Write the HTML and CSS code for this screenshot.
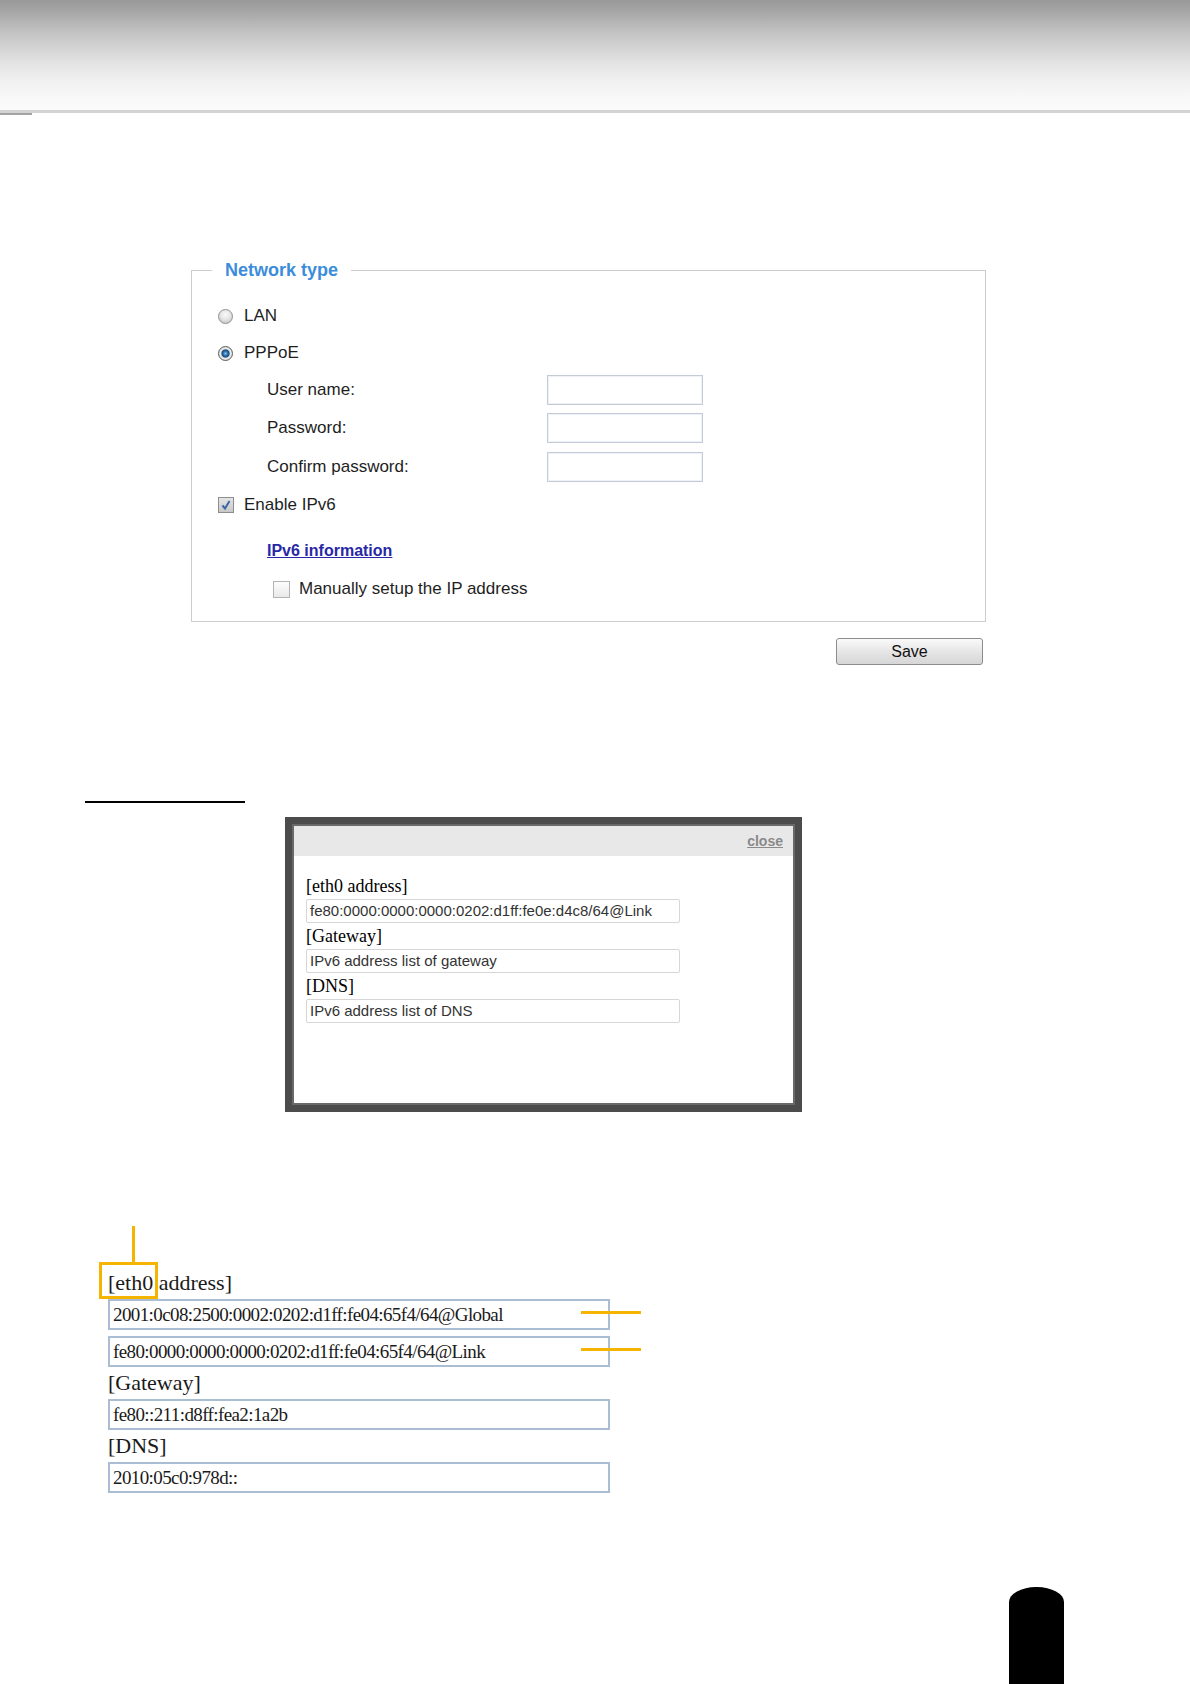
FILE: index.html
```html
<!DOCTYPE html>
<html>
<head>
<meta charset="UTF-8">
<title>Network type</title>
<link rel="stylesheet" href="styles.css">
</head>
<body>
	<!-- 页眉渐变条 -->
	<div class="topbar"></div>
	<div class="topbar-mark"></div>

	<!-- 网络类型设置 -->
	<fieldset class="nettype">
		<legend>Network type</legend>
		<div class="row row-lan"><span class="radio"></span>LAN</div>
		<div class="row row-pppoe"><span class="radio on"></span>PPPoE</div>
		<div class="row field"><span class="field-name">User name:</span><span class="textbox"></span></div>
		<div class="row field"><span class="field-name">Password:</span><span class="textbox"></span></div>
		<div class="row field row-confirm"><span class="field-name">Confirm password:</span><span class="textbox"></span></div>
		<div class="row"><span class="check on"><svg width="14" height="14" viewBox="0 0 14 14"><path d="M3.5 7.5 L6 10.5 L10.5 3" fill="none" stroke="#3c64a8" stroke-width="2"/></svg></span>Enable IPv6</div>
		<div class="row row-link"><a href="#" class="info-link">IPv6 information</a></div>
		<div class="row row-manual"><span class="check"></span>Manually setup the IP address</div>
	</fieldset>
	<div class="actions"><button class="save" type="button">Save</button></div>

	<div class="rule"></div>

	<!-- IPv6 信息弹窗 -->
	<div class="popup">
		<div class="popup-frame">
			<div class="popup-head"><a href="#" class="close">close</a></div>
			<div class="popup-body">
				<div class="plabel">[eth0 address]</div>
				<div class="pinput">fe80:0000:0000:0000:0202:d1ff:fe0e:d4c8/64@Link</div>
				<div class="plabel">[Gateway]</div>
				<div class="pinput">IPv6 address list of gateway</div>
				<div class="plabel">[DNS]</div>
				<div class="pinput">IPv6 address list of DNS</div>
			</div>
		</div>
	</div>

	<!-- 放大的地址示例，带标注 -->
	<div class="detail">
		<span class="mark-line"></span>
		<span class="mark-box"></span>
		<span class="mark-arrow arrow-1"></span>
		<span class="mark-arrow arrow-2"></span>
		<div class="dlabel">[eth0 address]</div>
		<div class="dinput">2001:0c08:2500:0002:0202:d1ff:fe04:65f4/64@Global</div>
		<div class="dinput dinput-next">fe80:0000:0000:0000:0202:d1ff:fe04:65f4/64@Link</div>
		<div class="dlabel">[Gateway]</div>
		<div class="dinput">fe80::211:d8ff:fea2:1a2b</div>
		<div class="dlabel">[DNS]</div>
		<div class="dinput">2010:05c0:978d::</div>
	</div>

	<div class="tab"></div>
</body>
</html>
```

FILE: styles.css
```css
html, body{
	margin: 0;
	padding: 0;
	width: 1190px;
	height: 1684px;
	overflow: hidden;
	background: #fff;
	font-family: "Liberation Sans", Arial, sans-serif;
	color: #1e1e1e;
}
.topbar{
	height: 110px;
	border-bottom: 3px solid #d3d3d3;
	background: linear-gradient(#999 0px, #a4a4a4 10px, #bdbdbd 28px, #d2d2d2 46px, #e4e4e4 64px, #f1f1f1 82px, #f8f8f8 98px, #fbfbfb 110px);
}
.topbar-mark{
	width: 32px;
	height: 2px;
	background: #a3a3a3;
}

/* 网络类型 */
.nettype{
	box-sizing: border-box;
	width: 795px;
	margin: 144px 0 0 191px;
	padding: 16px 0 13px 26px;
	border: 1px solid #cdcdcd;
	font-size: 17px;
}
.nettype legend{
	margin-left: -6px;
	padding: 0 13px;
	line-height: 22px;
	font-size: 18px;
	font-weight: bold;
	color: #3b8ddb;
}
.row{
	display: flex;
	align-items: center;
	height: 38px;
}
.row-pppoe{
	height: 36px;
}
.row-confirm{
	height: 39px;
}
.row-link{
	margin-top: 8px;
	padding-left: 49px;
}
.row-manual{
	padding-left: 55px;
}
.radio{
	box-sizing: border-box;
	width: 15px;
	height: 15px;
	margin-right: 11px;
	border-radius: 50%;
	border: 1px solid #8f8f8f;
	background: radial-gradient(circle at 50% 35%, #fafafa 0, #e6e6e6 45%, #bdbdbd 100%);
}
.radio.on{
	border-color: #5c5c5c;
	background: radial-gradient(circle, #8cc8f2 0, #2e74b4 2px, #1d4c7c 3.6px, #dcdcdc 4.6px, #ededed 5.2px, #b8b8b8 100%);
}
.field-name{
	width: 280px;
	padding-left: 49px;
}
.textbox{
	box-sizing: border-box;
	width: 156px;
	height: 30px;
	border: 1px solid #c3cbd7;
	box-shadow: inset 0 0 0 1px #eef1f5;
	background: #fff;
}
.check{
	box-sizing: border-box;
	display: flex;
	align-items: center;
	justify-content: center;
	width: 16px;
	height: 16px;
	margin-right: 10px;
	border: 1px solid #b4b4b4;
	background: linear-gradient(#fdfdfd, #e9e9e9);
}
.check.on{
	border-color: #8e8e8e;
	background: linear-gradient(#e4e4e4, #c8c8c8);
}
.row-manual .check{
	width: 17px;
	height: 17px;
	margin-right: 9px;
}
.info-link{
	font-size: 16px;
	font-weight: bold;
	color: #2828a6;
	text-decoration: underline;
}
.actions{
	width: 795px;
	margin: 16px 0 0 191px;
	box-sizing: border-box;
	padding-right: 3px;
	text-align: right;
}
.save{
	width: 147px;
	height: 27px;
	border: 1px solid #8c8c8c;
	border-radius: 3px;
	background: linear-gradient(#fafafa, #e6e6e6 50%, #d6d6d6);
	font-family: "Liberation Sans", Arial, sans-serif;
	font-size: 16px;
	color: #111;
	padding: 0;
}

.rule{
	width: 160px;
	height: 2px;
	margin: 136px 0 0 85px;
	background: #000;
}

/* 弹窗 */
.popup{
	box-sizing: border-box;
	width: 517px;
	height: 295px;
	margin: 14px 0 0 285px;
	border: 7px solid #4c4c4c;
	background: #fff;
}
.popup-frame{
	box-sizing: border-box;
	height: 100%;
	border: 2px solid #696969;
}
.popup-head{
	height: 30px;
	line-height: 30px;
	padding-right: 10px;
	text-align: right;
	background: #e8e8e8;
}
.close{
	font-size: 14px;
	font-weight: bold;
	color: #8a8a8a;
	text-decoration: underline;
}
.popup-body{
	padding: 17px 0 0 12px;
}
.plabel{
	line-height: 26px;
	font-family: "Liberation Serif", "Times New Roman", serif;
	font-size: 18px;
	color: #000;
}
.pinput{
	box-sizing: border-box;
	width: 374px;
	height: 24px;
	line-height: 22px;
	padding-left: 3px;
	border: 1px solid #d6d6d6;
	border-radius: 2px;
	font-size: 15px;
	color: #333;
}

/* 放大示例 */
.detail{
	position: relative;
	width: 502px;
	margin: 154px 0 0 108px;
	font-family: "Liberation Serif", "Times New Roman", serif;
	color: #1a1a1a;
}
.dlabel{
	height: 32px;
	line-height: 32px;
	font-size: 22px;
}
.detail .dlabel:first-of-type{
	height: 33px;
	line-height: 33px;
}
.dinput{
	box-sizing: border-box;
	height: 31px;
	line-height: 27px;
	padding-left: 3px;
	border: 2px solid #abbdd3;
	font-size: 19px;
	letter-spacing: -0.6px;
	white-space: nowrap;
}
.dinput-next{
	margin-top: 6px;
}
.mark-line{
	position: absolute;
	left: 24px;
	top: -40px;
	width: 3px;
	height: 36px;
	background: #f4b400;
}
.mark-box{
	position: absolute;
	left: -9px;
	top: -4px;
	box-sizing: border-box;
	width: 59px;
	height: 37px;
	border: 3px solid #f4b400;
}
.mark-arrow{
	position: absolute;
	left: 473px;
	width: 60px;
	height: 3px;
	background: #f4b400;
}
.arrow-1{
	top: 45px;
}
.arrow-2{
	top: 82px;
}

.tab{
	width: 55px;
	height: 97px;
	margin: 94px 0 0 1009px;
	background: #000;
	border-radius: 27px 27px 0 0 / 15px 15px 0 0;
}
```
